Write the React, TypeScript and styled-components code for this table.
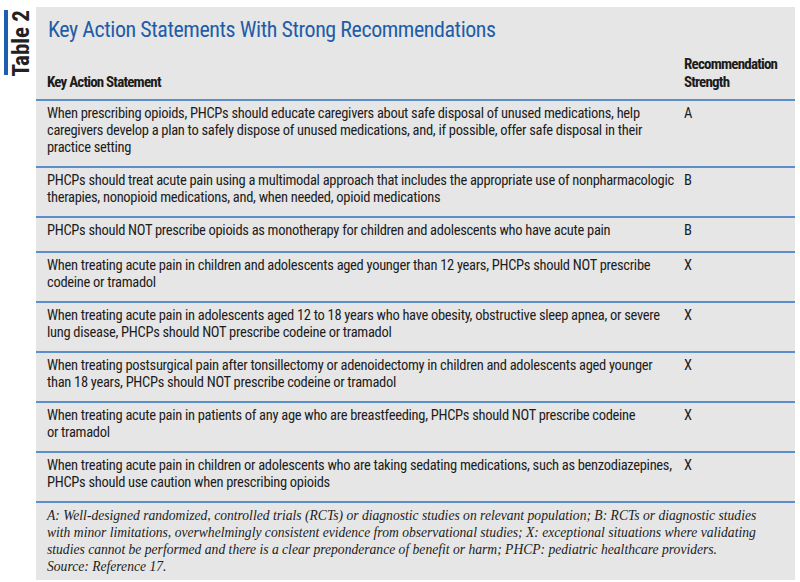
import React from "react";
import styled, { createGlobalStyle } from "styled-components";

const Global = createGlobalStyle`
  html, body { margin: 0; padding: 0; background: #ffffff; }
  body { font-family: "Roboto Condensed", "Liberation Sans Narrow", Roboto, "Liberation Sans", sans-serif; }
`;

const Page = styled.div`
  display: flex;
  align-items: flex-start;
  width: 800px;
  padding: 7px 5px 6px 0;
  box-sizing: border-box;
`;

const LabelCol = styled.div`
  display: flex;
  align-items: flex-start;
  gap: 2px;
  width: 36px;
  flex: none;
  padding: 3px 0 0 4px;
  box-sizing: border-box;
`;

const Bar = styled.div`
  width: 4px;
  height: 65px;
  background: #1d5fae;
`;

const LabelText = styled.div`
  writing-mode: vertical-rl;
  transform: rotate(180deg);
  font-size: 23px;
  line-height: 23px;
  font-weight: 700;
  color: #222222;
  white-space: nowrap;
`;

const Panel = styled.div`
  flex: 1;
  min-width: 0;
  background: #e6e6e6;
  color: #1c1c1c;
`;

const Title = styled.h1`
  margin: 0;
  padding: 10px 12px 0;
  font-size: 22px;
  line-height: 26px;
  font-weight: 400;
  letter-spacing: -0.45px;
  color: #1f5da8;
`;

const Row = styled.div<{ $head?: boolean; $min?: number }>`
  display: grid;
  box-sizing: border-box;
  grid-template-columns: 626px minmax(0, 1fr);
  column-gap: 11px;
  padding: ${(p) => (p.$head ? "12px 11px 8px" : "4px 11px 10px")};
  align-items: ${(p) => (p.$head ? "end" : "start")};
  border-top: ${(p) => (p.$head ? "none" : "2px solid #5a8fc8")};
  font-size: ${(p) => (p.$head ? "15px" : "14.5px")};
  line-height: ${(p) => (p.$head ? "18px" : "17px")};
  font-weight: ${(p) => (p.$head ? 700 : 400)};
  letter-spacing: ${(p) => (p.$head ? "-0.8px" : "-0.3px")};
  white-space: nowrap;
  min-height: ${(p) => (p.$min ? `${p.$min}px` : "0")};
`;

const Footnote = styled.div`
  border-top: 2px solid #5a8fc8;
  padding: 4px 11px 5px;
  font-family: "Liberation Serif", serif;
  font-style: italic;
  font-size: 13.6px;
  line-height: 17px;
  color: #1c1c1c;
  white-space: nowrap;
`;

const rows: [string[], string][] = [
  [
    [
      "When prescribing opioids, PHCPs should educate caregivers about safe disposal of unused medications, help",
      "caregivers develop a plan to safely dispose of unused medications, and, if possible, offer safe disposal in their",
      "practice setting",
    ],
    "A",
  ],
  [
    [
      "PHCPs should treat acute pain using a multimodal approach that includes the appropriate use of nonpharmacologic",
      "therapies, nonopioid medications, and, when needed, opioid medications",
    ],
    "B",
  ],
  [["PHCPs should NOT prescribe opioids as monotherapy for children and adolescents who have acute pain"], "B"],
  [
    [
      "When treating acute pain in children and adolescents aged younger than 12 years, PHCPs should NOT prescribe",
      "codeine or tramadol",
    ],
    "X",
  ],
  [
    [
      "When treating acute pain in adolescents aged 12 to 18 years who have obesity, obstructive sleep apnea, or severe",
      "lung disease, PHCPs should NOT prescribe codeine or tramadol",
    ],
    "X",
  ],
  [
    [
      "When treating postsurgical pain after tonsillectomy or adenoidectomy in children and adolescents aged younger",
      "than 18 years, PHCPs should NOT prescribe codeine or tramadol",
    ],
    "X",
  ],
  [
    [
      "When treating acute pain in patients of any age who are breastfeeding, PHCPs should NOT prescribe codeine",
      "or tramadol",
    ],
    "X",
  ],
  [
    [
      "When treating acute pain in children or adolescents who are taking sedating medications, such as benzodiazepines,",
      "PHCPs should use caution when prescribing opioids",
    ],
    "X",
  ],
];

const footLines = [
  "A: Well-designed randomized, controlled trials (RCTs) or diagnostic studies on relevant population; B: RCTs or diagnostic studies",
  "with minor limitations, overwhelmingly consistent evidence from observational studies; X: exceptional situations where validating",
  "studies cannot be performed and there is a clear preponderance of benefit or harm; PHCP: pediatric healthcare providers.",
  "Source: Reference 17.",
];

const withBreaks = (lines: string[]) =>
  lines.map((l, i) => (
    <React.Fragment key={i}>
      {i > 0 && <br />}
      {l}
    </React.Fragment>
  ));

export default function App() {
  return (
    <>
      <Global />
      <Page>
        <LabelCol>
          <Bar />
          <LabelText>Table 2</LabelText>
        </LabelCol>
        <Panel>
          <Title>Key Action Statements With Strong Recommendations</Title>
          <Row $head>
            <div>Key Action Statement</div>
            <div>{withBreaks(["Recommendation", "Strength"])}</div>
          </Row>
          {rows.map(([s, r], i) => (
            <Row key={i} $min={i === 2 ? 35 : 0}>
              <div>{withBreaks(s)}</div>
              <div>{r}</div>
            </Row>
          ))}
          <Footnote>{withBreaks(footLines)}</Footnote>
        </Panel>
      </Page>
    </>
  );
}
